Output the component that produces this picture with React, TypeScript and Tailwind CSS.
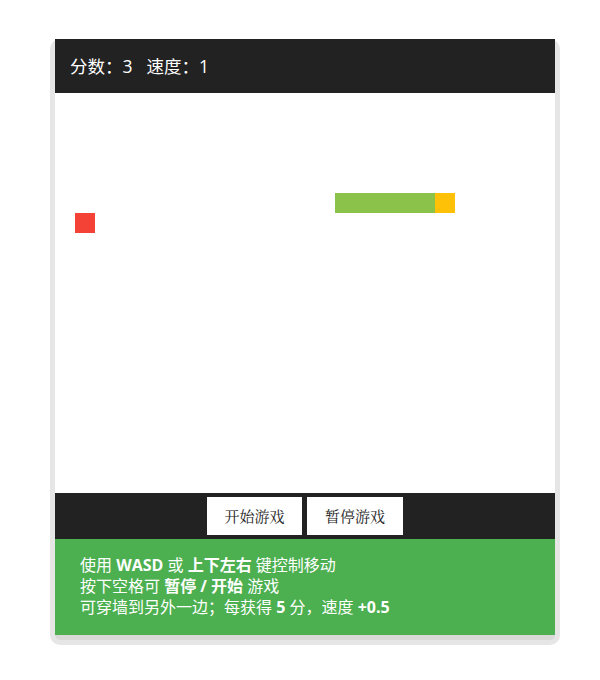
export default function App() {
  const cell = 'w-[20px] h-[20px]';
  const snake = [
    { x: 280, y: 100 },
    { x: 300, y: 100 },
    { x: 320, y: 100 },
    { x: 340, y: 100 },
    { x: 360, y: 100 },
  ];
  const head = { x: 380, y: 100 };
  const food = { x: 20, y: 120 };

  return (
    <div className="min-h-[680px] bg-white pt-[39px] pl-[55px]" style={{ fontFamily: '"Open Sans", "Noto Sans CJK SC", sans-serif' }}>
      <div className="w-[500px] rounded-[5px] shadow-[0_5px_0_0_#d9d9d9,0_5px_0_5px_#e6e6e6]">
        <div className="h-[54px] bg-[#222222] flex items-center px-[15px] text-white text-[17.5px]">
          <span>分数：3</span>
          <span className="ml-[14px]">速度：1</span>
        </div>

        <div className="relative h-[400px] bg-white">
          {snake.map((s, i) => (
            <div key={i} className={`absolute ${cell} bg-[#8bc34a]`} style={{ left: s.x, top: s.y }} />
          ))}
          <div className={`absolute ${cell} bg-[#ffc107]`} style={{ left: head.x, top: head.y }} />
          <div className={`absolute ${cell} bg-[#f44336]`} style={{ left: food.x, top: food.y }} />
        </div>

        <div className="h-[46px] bg-[#222222] flex items-center justify-center gap-[5px]">
          <button className="w-[95px] h-[38px] bg-white text-[#222] text-[15px]" style={{ fontFamily: '"Noto Serif CJK SC", "Noto Sans CJK SC", serif' }}>
            开始游戏
          </button>
          <button className="w-[96px] h-[38px] bg-white text-[#222] text-[15px]" style={{ fontFamily: '"Noto Serif CJK SC", "Noto Sans CJK SC", serif' }}>
            暂停游戏
          </button>
        </div>

        <div className="h-[96px] bg-[#4caf50] text-white text-[16px] leading-[21px] px-[25px] pt-[16px]">
          <p>
            使用 <b>WASD</b> 或 <b>上下左右</b> 键控制移动
          </p>
          <p>
            按下空格可 <b>暂停 / 开始</b> 游戏
          </p>
          <p>
            可穿墙到另外一边；每获得 <b>5</b> 分，速度 <b>+0.5</b>
          </p>
        </div>
      </div>
    </div>
  );
}
